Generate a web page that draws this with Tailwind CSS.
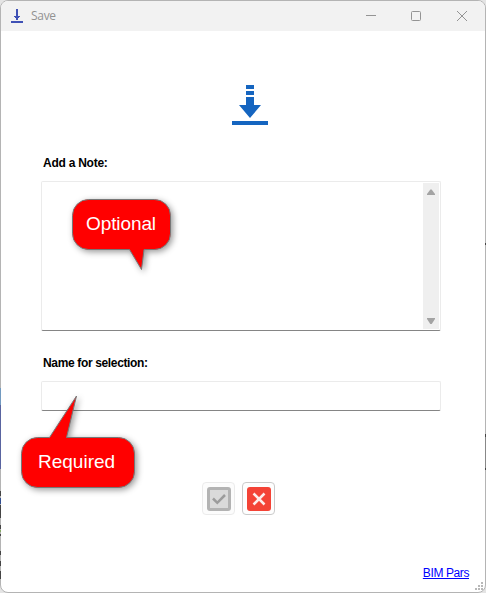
<!DOCTYPE html>
<html lang="en">
<head>
<meta charset="utf-8">
<title>Save</title>
<script src="https://cdn.jsdelivr.net/npm/@tailwindcss/browser@4"></script>
</head>
<body class="w-[486px] h-[593px] overflow-hidden bg-[#e4e4e4] font-['Liberation_Sans',Arial,sans-serif]">
<div class="relative flex flex-col w-[486px] h-[593px] rounded-lg border border-[#b4b4b4] bg-white">
  <header class="flex h-[30px] shrink-0 items-center justify-between rounded-t-[7px] bg-[#f2f2f2] pl-[10px] pr-[17px]">
    <div class="flex items-center gap-2">
      <svg class="block" width="12" height="14" viewBox="0 0 12 14" fill="#3f51b5"><path d="M5 0h2v7h2v1H8v1H7v2H5V9H4V8H3V7h2zM0 12h12v2H0z"/></svg>
      <span class="font-['Open_Sans',sans-serif] text-[12px] leading-4 text-[#929292] tracking-[-0.3px]">Save</span>
    </div>
    <div class="flex items-center gap-[35px] text-[#949494]">
      <svg class="block" width="10" height="10" stroke="currentColor"><path d="M0 4.500h10"/></svg>
      <svg class="block" width="10" height="10" fill="none" stroke="currentColor"><rect x=".5" y=".5" width="9" height="9" rx="1"/></svg>
      <svg class="block" width="12" height="12" viewBox="0 0 12 12" stroke="currentColor"><path d="M1 1l10 10M11 1L1 11"/></svg>
    </div>
  </header>
  <main class="flex flex-1 flex-col pl-10 pr-[44px] pt-[54px]">
    <svg class="ml-[191px] block shrink-0" width="36" height="40" viewBox="0 0 36 40" fill="#1565c0"><path d="M14 0h8v4h-8zM14 6h8v4h-8zM14 12h8v8h7L18 33 7 20h7zM0 36h36v4H0z"/></svg>
    <label class="mt-[30px] h-4 whitespace-nowrap pl-[2px] text-[12px] font-bold leading-4 tracking-[-0.25px] text-black">Add a Note:</label>
    <div class="mt-[10px] flex h-[150px] w-[400px] shrink-0 justify-end rounded-[2px] border border-[#ebebeb] border-b-[#858585] pt-px pr-px">
      <div class="flex h-[146px] w-4 flex-col items-center justify-between bg-[#efefef] pt-[6px] pb-[4px] text-[#a3a3a3]">
        <svg class="block" width="8" height="7" fill="currentColor"><path d="M3.4.4h1.2L8 5v1H0V5z"/></svg>
        <svg class="block" width="8" height="7" fill="currentColor"><path d="M0 0h8v1L4.700 6H3.300L0 1z"/></svg>
      </div>
    </div>
    <label class="mt-[24px] h-4 whitespace-nowrap pl-[2px] text-[12px] font-bold leading-4 tracking-[-0.35px] text-black">Name for selection:</label>
    <div class="mt-[10px] h-[30px] w-[400px] shrink-0 rounded-[2px] border border-[#ebebeb] border-b-[#858585]"></div>
    <div class="mt-[71px] ml-[161px] flex gap-[7px]">
      <div class="flex h-[33px] w-[33px] items-center justify-center rounded-[4px] border border-[#ebebeb] bg-[#fcfcfc]">
        <svg class="block" width="24" height="24"><rect x="1.5" y="1.5" width="21" height="21" rx="1.5" fill="#dadada" stroke="#b3b3b3" stroke-width="3"/><path d="M6 11.500l4.300 4.300L18 8" fill="none" stroke="#9c9c9c" stroke-width="2.500"/></svg>
      </div>
      <div class="flex h-[33px] w-[33px] items-center justify-center rounded-[4px] border border-[#cbcbcb] bg-[#fefefe]">
        <svg class="block" width="24" height="24"><rect width="24" height="24" rx="3" fill="#f44336"/><path d="M6.500 6.500l11 11M17.500 6.500l-11 11" stroke="#fdecea" stroke-width="2.500"/></svg>
      </div>
    </div>
    <a class="mt-[50px] mr-[-28px] self-end whitespace-nowrap text-[12px] leading-4 tracking-[-0.4px] text-[#0000ff] underline decoration-1 underline-offset-1">BIM Pars</a>
  </main>
  <!-- Resize grip -->
  <svg class="absolute right-[2px] bottom-[2px] block" width="8" height="8" fill="#b8b8b8"><path d="M6 0h2v2H6zM3 3h2v2H3zM6 3h2v2H6zM0 6h2v2H0zM3 6h2v2H3zM6 6h2v2H6z"/></svg>
  <!-- Callouts -->
  <div class="absolute left-[70px] top-[196px] h-[76px] w-[102px]">
    <svg class="absolute inset-0 block overflow-visible drop-shadow-[2px_2px_3px_rgba(0,0,0,0.4)]" width="102" height="76"><path d="M17.500 2.500H83.500a16 16 0 0 1 16 16V36.500a16 16 0 0 1-16 16H73L70.500 72.500 58.500 52.500H17.500a16 16 0 0 1-16-16V18.500a16 16 0 0 1 16-16z" fill="#f00" stroke="#777"/></svg>
    <span class="absolute left-[15px] top-[15px] whitespace-nowrap text-[19px] leading-6 tracking-[-0.1px] text-white">Optional</span>
  </div>
  <div class="absolute left-[19px] top-[393px] h-[96px] w-[118px]">
    <svg class="absolute inset-0 block overflow-visible drop-shadow-[2px_2px_3px_rgba(0,0,0,0.4)]" width="118" height="96"><path d="M17.500 43.500H29.500L56.500 2 46.500 43.500H98.500a16 16 0 0 1 16 16V77.500a16 16 0 0 1-16 16H17.500a16 16 0 0 1-16-16V59.500a16 16 0 0 1 16-16z" fill="#f00" stroke="#777"/></svg>
    <span class="absolute left-[18px] top-[56px] whitespace-nowrap text-[19px] leading-6 text-white">Required</span>
  </div>
  <!-- Slivers of the desktop along the window edges -->
  <svg class="absolute -left-px -top-px block" width="1" height="593"><path fill="#729ac0" d="M0 388h1v17H0z"/><path fill="#5964a0" d="M0 405h1v64H0z"/><path fill="#444" d="M0 491h1v5H0zM0 505h1v13H0zM0 525h1v4H0zM0 534h1v2H0zM0 551h1v4H0zM0 561h1v5H0zM0 571h1v8H0z"/><path fill="#334f91" d="M0 498h1v6H0z"/><path fill="#8a6" d="M0 530h1v2H0z"/></svg>
  <svg class="absolute -right-px -top-px block" width="1" height="593"><path fill="#444" d="M0 243h1v2H0zM0 434h1v3H0zM0 468h1v2H0z"/><path fill="#888" d="M0 437h1v31H0z"/></svg>
</div>
</body>
</html>
